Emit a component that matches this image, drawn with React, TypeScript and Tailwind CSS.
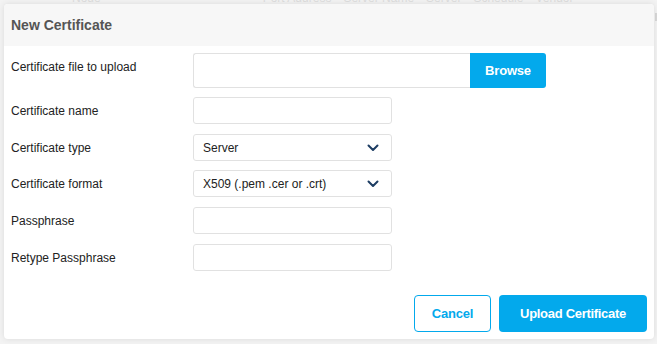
import React from "react";

const Chevron = () => (
  <svg width="12" height="8" viewBox="0 0 12 8" className="shrink-0">
    <polyline points="1.5,1.5 6,6 10.5,1.5" fill="none" stroke="#1d3d63" strokeWidth="2" strokeLinecap="round" strokeLinejoin="round" />
  </svg>
);

function Label({ children, className = "" }: { children: React.ReactNode; className?: string }) {
  return <div className={`w-[182px] shrink-0 text-[12px] leading-[14px] text-[#222] ${className}`}>{children}</div>;
}

function TextBox() {
  return <div className="w-[199px] h-[27px] border border-[#e1e1e1] rounded-[3px] bg-white" />;
}

function Select({ value }: { value: string }) {
  return (
    <div className="w-[199px] h-[27px] border border-[#e1e1e1] rounded-[3px] bg-white flex items-center justify-between pl-[9px] pr-[12px] text-[12px] text-[#222]">
      <span>{value}</span>
      <Chevron />
    </div>
  );
}

export default function App() {
  return (
    <div className="relative w-[657px] h-[344px] overflow-hidden bg-[#f3f3f3] font-['Liberation_Sans',Arial,sans-serif]">
      {/* faint background page content */}
      <div className="flex h-[5px] overflow-hidden text-[12px] leading-[14px] text-[#dedede] whitespace-nowrap">
        <div className="-mt-[9px] flex">
          <span className="ml-[72px]">Node</span>
          <span className="ml-[162px]">Port Address</span>
          <span className="ml-[12px]">Server Name</span>
          <span className="ml-[12px]">Server</span>
          <span className="ml-[12px]">Schedule</span>
          <span className="ml-[12px]">Vendor</span>
        </div>
      </div>
      <div className="absolute right-0 top-[13px] w-[2px] h-[8px] bg-[#d8d8d8]" />

      {/* modal */}
      <div className="absolute left-[4px] top-[4px] w-[650px] h-[335px] bg-white rounded-[4px] shadow-[0_0_6px_rgba(0,0,0,0.10)] flex flex-col overflow-hidden">
        <div className="h-[42px] shrink-0 bg-[#f7f7f7] flex items-center px-[7px]">
          <span className="text-[14px] font-bold text-[#555]">New Certificate</span>
        </div>

        <div className="px-[7px] pt-[7px] flex flex-col">
          <div className="flex items-start">
            <Label className="pt-[7px]">Certificate file to upload</Label>
            <div className="flex w-[353px] h-[35px]">
              <div className="flex-1 border border-[#e1e1e1] border-r-0 rounded-l-[3px] bg-white" />
              <div className="w-[76px] bg-[#03a9ec] rounded-r-[3px] flex items-center justify-center text-white text-[13px] font-bold tracking-[-0.2px]">
                Browse
              </div>
            </div>
          </div>

          <div className="flex items-center mt-[9px]">
            <Label>Certificate name</Label>
            <TextBox />
          </div>
          <div className="flex items-center mt-[10px]">
            <Label>Certificate type</Label>
            <Select value="Server" />
          </div>
          <div className="flex items-center mt-[9px]">
            <Label>Certificate format</Label>
            <Select value="X509 (.pem .cer or .crt)" />
          </div>
          <div className="flex items-center mt-[10px]">
            <Label>Passphrase</Label>
            <TextBox />
          </div>
          <div className="flex items-center mt-[10px]">
            <Label>Retype Passphrase</Label>
            <TextBox />
          </div>
        </div>

        <div className="flex-1 flex items-end justify-end gap-[8px] px-[7px] pb-[7px]">
          <div className="w-[77px] h-[37px] border border-[#03a9ec] rounded-[4px] flex items-center justify-center text-[#03a9ec] text-[13px] font-bold tracking-[-0.2px]">
            Cancel
          </div>
          <div className="w-[148px] h-[37px] bg-[#03a9ec] rounded-[4px] flex items-center justify-center text-white text-[13px] font-bold tracking-[-0.3px]">
            Upload Certificate
          </div>
        </div>
      </div>
    </div>
  );
}
